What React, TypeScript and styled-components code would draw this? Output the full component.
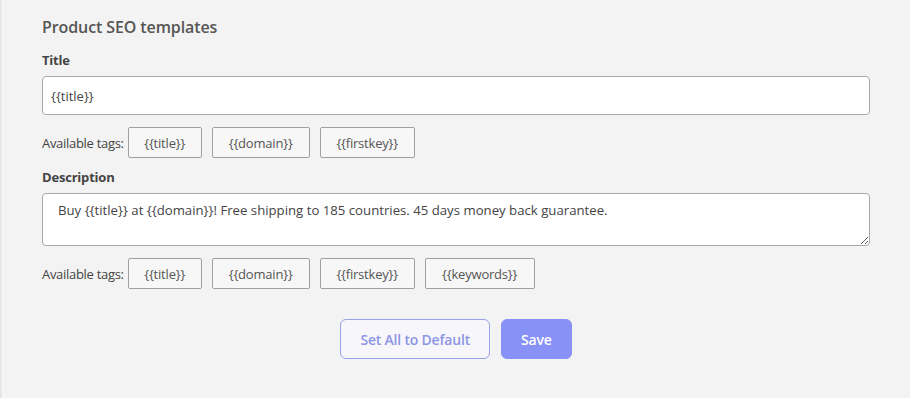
import styled, { createGlobalStyle } from 'styled-components';
import { FC } from 'react';

const GlobalStyle = createGlobalStyle`
  html, body {
    margin: 0;
    padding: 0;
    background: #f3f3f3;
  }
  body {
    font-family: "Open Sans", "Noto Sans", Arial, sans-serif;
    color: #444;
  }
`;

const Page = styled.div`
  min-height: 398px;
  box-sizing: border-box;
  border-left: 2px solid #e6e6ea;
  box-shadow: inset 1px 0 0 #fafafa;
  padding: 15px 40px 0 40px;
`;

const Heading = styled.h2`
  margin: 0 0 12px;
  font-size: 16px;
  font-weight: 600;
  color: #555;
  line-height: 24px;
  letter-spacing: -0.1px;
`;

const Label = styled.div`
  font-size: 13px;
  font-weight: 700;
  color: #444;
  line-height: 18px;
  margin-bottom: 7px;
  letter-spacing: -0.2px;
`;

const TextInput = styled.input`
  display: block;
  width: 100%;
  box-sizing: border-box;
  height: 39px;
  padding: 0 8px;
  border: 1px solid #a8a8a8;
  border-radius: 4px;
  background: #fff;
  font-family: inherit;
  font-size: 13px;
  color: #444;
  outline: none;
`;

const TextArea = styled.textarea`
  display: block;
  width: 100%;
  box-sizing: border-box;
  height: 53px;
  padding: 7px 15px;
  border: 1px solid #a8a8a8;
  border-radius: 4px;
  background: #fff;
  font-family: inherit;
  font-size: 13.2px;
  color: #444;
  outline: none;
  resize: vertical;
`;

const TagRow = styled.div`
  display: flex;
  align-items: center;
  gap: 10px;
  margin: 12px 0 0;
`;

const TagsLabel = styled.span`
  font-size: 13px;
  color: #444;
  margin-right: -6px;
  letter-spacing: -0.3px;
`;

const Tag = styled.button<{ $w: number }>`
  width: ${({ $w }) => $w}px;
  height: 31px;
  box-sizing: border-box;
  border: 1px solid #a0a0a0;
  border-radius: 2px;
  background: #f7f7f7;
  font-family: inherit;
  font-size: 13px;
  color: #555;
  letter-spacing: -0.2px;
  cursor: pointer;
`;

const Section = styled.div<{ $top: number }>`
  margin-top: ${({ $top }) => $top}px;
`;

const Actions = styled.div`
  display: flex;
  justify-content: center;
  gap: 11px;
  margin-top: 30px;
`;

const Button = styled.button<{ $primary?: boolean }>`
  height: 40px;
  box-sizing: border-box;
  border-radius: 6px;
  font-family: inherit;
  font-size: 14px;
  font-weight: 600;
  letter-spacing: -0.2px;
  cursor: pointer;
  padding: 0 19px;
  border: 1px solid ${({ $primary }) => ($primary ? '#8791f6' : '#9aa1e6')};
  background: ${({ $primary }) => ($primary ? '#8791f6' : '#f7f7fb')};
  color: ${({ $primary }) => ($primary ? '#fff' : '#8d95e4')};
`;

const tagWidths: Record<string, number> = {
  '{{title}}': 74,
  '{{domain}}': 98,
  '{{firstkey}}': 95,
  '{{keywords}}': 110,
};

const Tags: FC<{ tags: string[] }> = ({ tags }) => (
  <TagRow>
    <TagsLabel>Available tags:</TagsLabel>
    {tags.map((t) => (
      <Tag key={t} $w={tagWidths[t]}>
        {t}
      </Tag>
    ))}
  </TagRow>
);

const App: FC = () => (
  <>
    <GlobalStyle />
    <Page>
      <Heading>Product SEO templates</Heading>
      <Label>Title</Label>
      <TextInput defaultValue="{{title}}" />
      <Tags tags={['{{title}}', '{{domain}}', '{{firstkey}}']} />
      <Section $top={10}>
        <Label>Description</Label>
        <TextArea defaultValue="Buy {{title}} at {{domain}}! Free shipping to 185 countries. 45 days money back guarantee." />
        <Tags tags={['{{title}}', '{{domain}}', '{{firstkey}}', '{{keywords}}']} />
      </Section>
      <Actions>
        <Button>Set All to Default</Button>
        <Button $primary>Save</Button>
      </Actions>
    </Page>
  </>
);

export default App;
